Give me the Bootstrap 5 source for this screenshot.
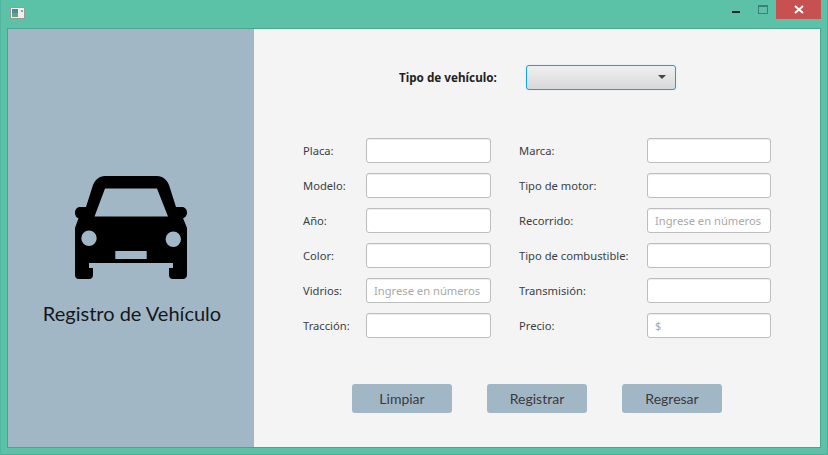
<!doctype html>
<html lang="es"><head><meta charset="utf-8"><title>Registro de Vehículo</title>
<link href="https://cdn.jsdelivr.net/npm/bootstrap@5.3.0/dist/css/bootstrap.min.css" rel="stylesheet">
<style>
html,body{margin:0;height:100%;overflow:hidden}
.win-frame{width:828px;height:455px;background:#5bc2a8;border:1px solid #4fae97;border-top:0;border-left-color:#52b69e;padding:0 6px 6px 6px}
.win-title{height:28px}
.win-logo{margin:7px 0 0 3px;display:block}
.win-controls{height:28px}
.win-min{width:8px;height:2px;background:#222;margin:11px 18px 0 0}
.win-max{width:10px;height:9px;border:1px solid #3f7f77;border-top-width:2px;margin:5px 8px 0 0}
.win-close{width:45px;height:19px;background:#c75050}
.win-body{height:420px;border:1px solid #4aa58e;background:#f4f4f4}
.side-panel{width:246px;background:#a2b7c6;color:#111;padding-top:24px}
.side-title{font:20px "Lato",sans-serif;margin-top:22px;padding-left:2px;color:#14181b}
.form-panel{padding:35px 0 0 49px;color:#333}
.type-row{padding-left:96px;height:26px}
.type-label{width:127px;font:bold 11.7px "Noto Sans",sans-serif;color:#222}
.type-select{width:150px;height:25px;border:1px solid #10a8dc;border-radius:3px;background:linear-gradient(#f0f0f0,#d8d8d8);box-shadow:0 0 1px #7fd0ee;padding-right:9px}
.caret-down{width:0;height:0;border:4px solid transparent;border-top:4px solid #444;border-bottom:0}
.field-grid{display:grid;grid-template-columns:63px 125px 28px 128px 124px;row-gap:10px;margin-top:48px}
.field-label{font:11.2px/25px "Noto Sans",sans-serif;color:#3a3f45;white-space:nowrap}
.field-input{height:25px;width:100%;border:1px solid #bdbdbd;border-radius:3px;background:#fff;padding:0 7px;font:11.2px "Noto Sans",sans-serif;color:#333;outline:0;box-shadow:inset 0 1px 1px #eee}
.field-input::placeholder{color:#a9a9a9;opacity:1}
.action-row{margin-top:46px;padding-left:49px;gap:35px}
.action-btn{width:100px;height:29px;background:#a2b7c6;border:0;border-radius:3px;padding:0;font:14px "Lato",sans-serif;color:#3a3a3a}
</style></head>
<body>
<div class="win-frame d-flex flex-column">
  <div class="win-title d-flex justify-content-between">
    <svg class="win-logo" width="15" height="12" viewBox="0 0 15 12"><rect x=".5" y=".5" width="14" height="11" fill="#eee" stroke="#999"/><rect x="2" y="2" width="6" height="8" fill="#4f8aa0"/><rect x="2" y="6" width="6" height="4" fill="#5fa67c"/><rect x="11" y="3" width="2" height="2" fill="#6fb79a"/></svg>
    <div class="win-controls d-flex align-items-start">
      <div class="win-min"></div>
      <div class="win-max"></div>
      <div class="win-close d-flex align-items-center justify-content-center">
        <svg width="10" height="9" viewBox="0 0 10 9"><path d="M1 1l8 7M9 1L1 8" stroke="#fff" stroke-width="2"/></svg>
      </div>
    </div>
  </div>
  <div class="win-body d-flex">
    <div class="side-panel d-flex flex-column align-items-center">
      <svg class="mt-auto" width="112" height="103" viewBox="0 0 112 103" aria-hidden="true">
        <path fill="#000" fill-rule="evenodd" d="M30 0H82C88 0 92 4 94 9L101 31H107C110 31 112 33.500 112 36.500C112 39.500 110 42 108 42L112 52V99C112 101.500 110 103 108 103H98C95.500 103 94 101.500 94 99V92H98V87H14V92H18V99C18 101.500 16.500 103 14 103H4C1.500 103 0 101.500 0 99V52L3.500 42C1.500 42 0 39.500 0 36.500C0 33.500 2 31 5 31H11L18 9C20 4 24 0 30 0ZM30 12.500 19.500 40.500H93L82 12.500ZM14 54.500A7.700 7.700 0 1 0 14 69.900 7.700 7.700 0 1 0 14 54.500ZM98.300 55.500A7.700 7.700 0 1 0 98.300 70.900 7.700 7.700 0 1 0 98.300 55.500ZM40.300 75V83H71.700V75Z"/>
      </svg>
      <div class="side-title mb-auto">Registro de Vehículo</div>
    </div>
    <div class="form-panel flex-grow-1">
      <div class="type-row d-flex align-items-center">
        <div class="type-label">Tipo de vehículo:</div>
        <div class="type-select d-flex align-items-center justify-content-end"><span class="caret-down"></span></div>
      </div>
      <div class="field-grid">
        <div class="field-label">Placa:</div><input class="field-input"><div></div><div class="field-label">Marca:</div><input class="field-input">
        <div class="field-label">Modelo:</div><input class="field-input"><div></div><div class="field-label">Tipo de motor:</div><input class="field-input">
        <div class="field-label">Año:</div><input class="field-input"><div></div><div class="field-label">Recorrido:</div><input class="field-input" placeholder="Ingrese en números">
        <div class="field-label">Color:</div><input class="field-input"><div></div><div class="field-label">Tipo de combustible:</div><input class="field-input">
        <div class="field-label">Vidrios:</div><input class="field-input" placeholder="Ingrese en números"><div></div><div class="field-label">Transmisión:</div><input class="field-input">
        <div class="field-label">Tracción:</div><input class="field-input"><div></div><div class="field-label">Precio:</div><input class="field-input" placeholder="$">
      </div>
      <div class="action-row d-flex">
        <button class="action-btn" type="button">Limpiar</button>
        <button class="action-btn" type="button">Registrar</button>
        <button class="action-btn" type="button">Regresar</button>
      </div>
    </div>
  </div>
</div>
</body></html>
